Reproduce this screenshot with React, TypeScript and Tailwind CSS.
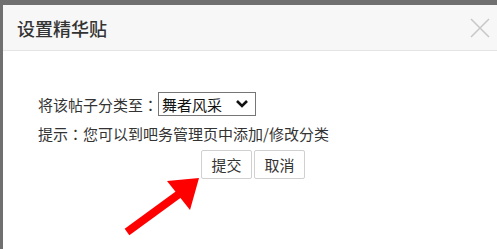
import React from "react";

const Colon = () => (
  <span style={{ fontFamily: '"Noto Sans CJK TC", sans-serif' }}>：</span>
);

export default function App() {
  return (
    <div
      className="relative w-[497px] h-[249px] overflow-hidden bg-[#707070] pt-[5px] pl-[3px]"
      style={{ fontFamily: '"Noto Sans CJK SC", "Noto Sans", sans-serif' }}
    >
      <div className="w-[494px] h-[244px] bg-white flex flex-col">
        <div className="h-[46px] bg-[#f7f7f7] border-b border-[#e5e5e5] flex items-center justify-between pl-[14px] pr-[6px]">
          <span className="text-[18px] font-medium text-[#333] leading-none">设置精华贴</span>
          <svg width="22" height="22" viewBox="0 0 22 22">
            <path d="M2 2 L20 20 M20 2 L2 20" stroke="#c8c8c8" strokeWidth="1.6" fill="none" />
          </svg>
        </div>
        <div className="pl-[35px] pt-[41px] text-[15px] text-[#333]">
          <div className="flex items-center h-[24px]">
            <span className="leading-none">将该帖子分类至<Colon /></span>
            <div className="w-[98px] h-[24px] border border-[#767676] flex items-center justify-between pl-[3px] pr-[6px] bg-white">
              <span className="leading-none text-[#111]">舞者风采</span>
              <svg width="14" height="10" viewBox="0 0 14 10">
                <path d="M2 2 L7 7 L12 2" stroke="#111" strokeWidth="2.6" fill="none" />
              </svg>
            </div>
          </div>
          <div className="mt-[10px] leading-none h-[15px]">提示<Colon />您可以到吧务管理页中添加/修改分类</div>
          <div className="mt-[9px] flex gap-[2px] pl-[163px]">
            <button className="w-[51px] h-[29px] border border-[#d0d0d0] rounded-[2px] bg-white text-[15px] text-[#333] leading-none">提交</button>
            <button className="w-[51px] h-[29px] border border-[#d0d0d0] rounded-[2px] bg-white text-[15px] text-[#333] leading-none">取消</button>
          </div>
        </div>
      </div>
      <svg className="absolute left-0 top-0" width="497" height="249" viewBox="0 0 497 249">
        <line x1="127" y1="232" x2="190" y2="186" stroke="#ff0000" strokeWidth="8" />
        <polygon points="199,178 167,181 190,210" fill="#ff0000" />
      </svg>
    </div>
  );
}
